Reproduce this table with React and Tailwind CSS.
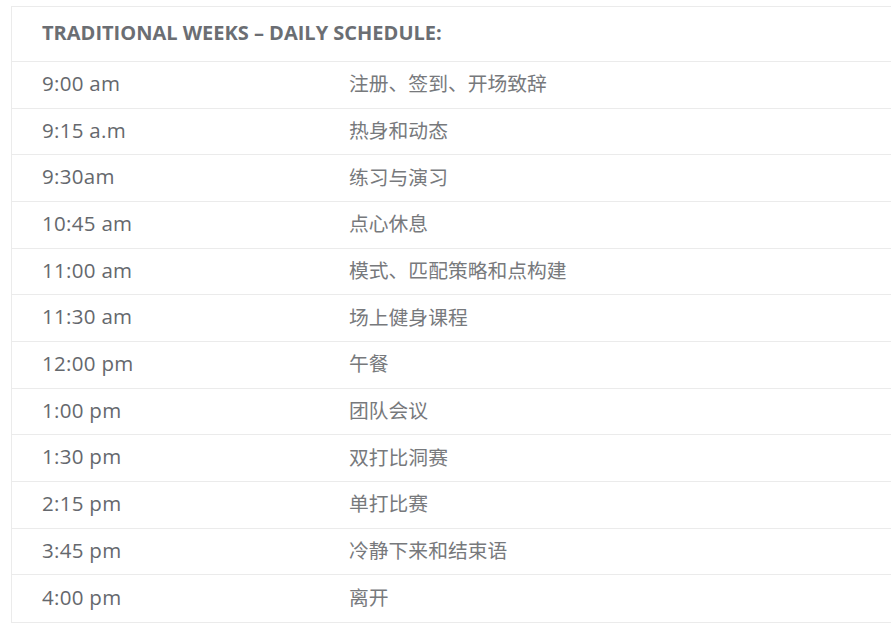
const rows = [
  ["9:00 am", "注册、签到、开场致辞"],
  ["9:15 a.m", "热身和动态"],
  ["9:30am", "练习与演习"],
  ["10:45 am", "点心休息"],
  ["11:00 am", "模式、匹配策略和点构建"],
  ["11:30 am", "场上健身课程"],
  ["12:00 pm", "午餐"],
  ["1:00 pm", "团队会议"],
  ["1:30 pm", "双打比洞赛"],
  ["2:15 pm", "单打比赛"],
  ["3:45 pm", "冷静下来和结束语"],
  ["4:00 pm", "离开"],
];

const App = () => {
  return (
    <div className="h-[634px] w-[891px] overflow-hidden bg-white pl-[11px] pt-[6px]">
      <div className="w-[920px] border-l border-t border-b border-[#ebebeb]">
        <div className="flex h-[55px] items-center border-b border-[#ebebeb] pl-[30px]">
          <h5 className="-mt-[2px] font-['Open_Sans','Noto_Sans',sans-serif] text-[20px] font-bold text-[#6b6e73]">
            TRADITIONAL WEEKS – DAILY SCHEDULE:
          </h5>
        </div>

        {rows.map(([time, item], i) => (
          <div
            key={time}
            className={
              "grid h-[46.67px] grid-cols-[279px_475px_1fr] items-center " +
              (i < rows.length - 1 ? "border-b border-[#ebebeb]" : "")
            }
          >
            <span className="-mt-[3px] pl-[30px] font-['Open_Sans','Noto_Sans',sans-serif] text-[20.5px] tracking-[0.3px] text-[#65686d]">
              {time}
            </span>
            <span className="-mt-[3px] pl-[58px] font-['Noto_Sans_CJK_SC',sans-serif] text-[19.8px] text-[#77797c]">
              {item}
            </span>
            <span />
          </div>
        ))}
      </div>
    </div>
  );
};

export default App;
